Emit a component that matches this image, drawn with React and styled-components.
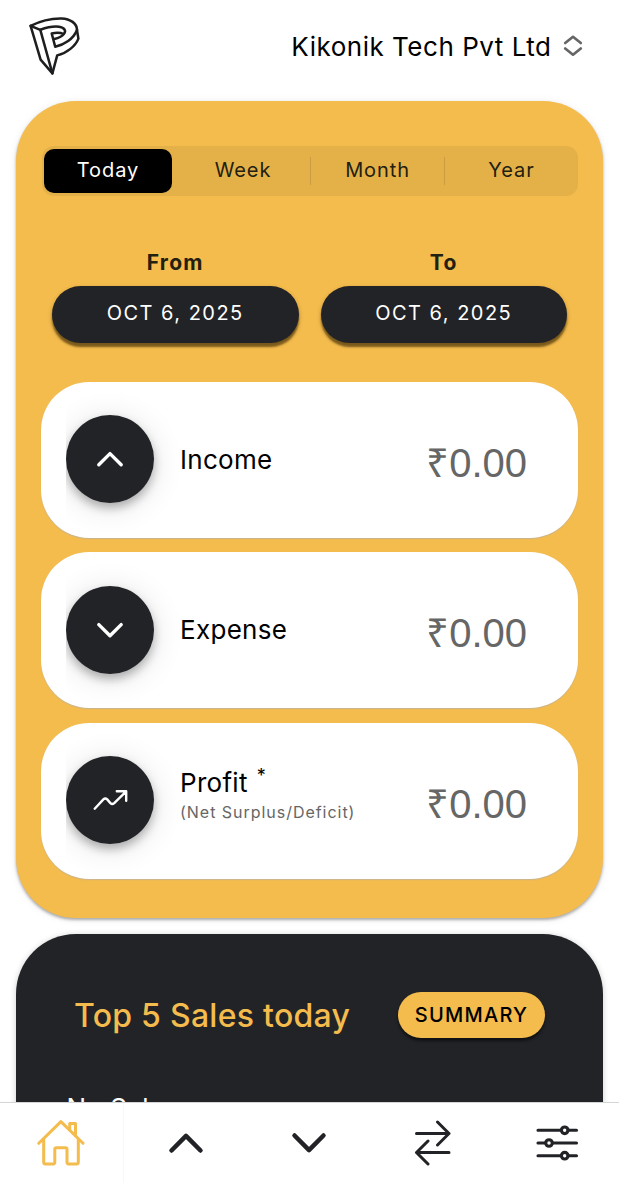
import React, { useState } from 'react';
import styled, { createGlobalStyle } from 'styled-components';

const GlobalStyle = createGlobalStyle`
  * {
    box-sizing: border-box;
  }
  body {
    margin: 0;
    background: #fff;
    font-family: Inter, "Liberation Sans", sans-serif;
  }
  button {
    font-family: inherit;
    border: none;
    padding: 0;
    cursor: pointer;
  }
`;

const Logo = () => (
  <svg width="54" height="60" viewBox="27 16 54 60" fill="none" stroke="#1d1e20" strokeWidth="2.5" strokeLinejoin="round" strokeLinecap="round">
    <path d="M30.6 25.8C41 20.5 52 18.2 61.5 18.4C70.5 18.7 77 23.5 77 30L78.4 38.6C75.6 46 67 53 57.2 55.4L52.4 73.4L40.6 59.6Z" />
    <path d="M30.6 25.8L40.3 29.8L52.4 73.4" />
    <path d="M40.3 29.8C47 27.4 54 26.2 59 26.8C64.6 27.6 66.4 30.8 64 33.8C62 36.4 58.6 38.2 54.4 39" />
    <path d="M63.6 34C60.4 32.4 55.4 32.6 51.7 33.4L55.2 46.8C64 44.8 73.6 39 77 30" />
  </svg>
);

const HomeIcon = () => (
  <svg width="48" height="48" viewBox="0 0 48 48" fill="none" stroke="#f4bb4d" strokeWidth="3" strokeLinecap="round" strokeLinejoin="round">
    <path d="M1.8 24.3L23.9 2.6L46 24.3" />
    <path d="M6.7 20V43.3Q6.7 44.9 8.3 44.9H16.2Q17.8 44.9 17.8 43.3V30.3Q17.8 28.7 19.4 28.7H28.4Q30 28.7 30 30.3V43.3Q30 44.9 31.6 44.9H39.7Q41.3 44.9 41.3 43.3V20" />
    <path d="M32.7 10.5V4.6H38.5V16.3" />
  </svg>
);

const SwapIcon = () => (
  <svg width="38" height="46" viewBox="0 0 38 46" fill="none" stroke="#222327" strokeWidth="3" strokeLinecap="round" strokeLinejoin="round">
    <path d="M2.5 13.5H35M23.5 2L35 13.5L23.5 25" />
    <path d="M35 32.5H2.5M14 21L2.5 32.5L14 44" />
  </svg>
);

const FilterIcon = () => (
  <svg width="44" height="38" viewBox="0 0 44 38" fill="none" stroke="#222327" strokeWidth="3.1" strokeLinecap="round">
    <path d="M3 6.3H26M33 6.3H41.5M3 19H10.5M17.5 19H41.5M3 31.7H26M33 31.7H41.5" />
    <circle cx="29.7" cy="6.3" r="3.3" />
    <circle cx="14" cy="19" r="3.3" />
    <circle cx="29.7" cy="31.7" r="3.3" />
  </svg>
);

const tabs = ['Today', 'Week', 'Month', 'Year'];

const ranges = [
  { label: 'From', date: 'OCT 6, 2025' },
  { label: 'To', date: 'OCT 6, 2025' },
];

const stats = [
  {
    title: 'Income',
    value: '0.00',
    icon: <path d="M-11.2 5.8L0 -5.4L11.2 5.8" strokeWidth="3.4" />,
  },
  {
    title: 'Expense',
    value: '0.00',
    icon: <path d="M-11.2 -5.4L0 5.8L11.2 -5.4" strokeWidth="3.4" />,
  },
  {
    title: 'Profit',
    mark: '*',
    note: '(Net Surplus/Deficit)',
    value: '0.00',
    icon: <path d="M-15.3 8.7L-6.6 -.6Q-4.7 -2.4 -2.8 -.6L.4 3.1Q2.3 4.8 4.2 3.1L16 -8.3M6.8 -8.7H16.2V.8" strokeWidth="2.4" />,
  },
];

const navList = [
  { name: 'home', icon: <HomeIcon /> },
  {
    name: 'income',
    icon: (
      <svg width="36" height="24" viewBox="0 0 36 24" fill="none" stroke="#222327" strokeWidth="4.5" strokeLinecap="round" strokeLinejoin="round">
        <path d="M3.5 19.5L18 4.8L32.5 19.5" />
      </svg>
    ),
  },
  {
    name: 'expense',
    icon: (
      <svg width="36" height="24" viewBox="0 0 36 24" fill="none" stroke="#222327" strokeWidth="4.5" strokeLinecap="round" strokeLinejoin="round">
        <path d="M3.5 4.5L18 19.2L32.5 4.5" />
      </svg>
    ),
  },
  { name: 'transfer', icon: <SwapIcon /> },
  { name: 'settings', icon: <FilterIcon /> },
];

const App = () => {
  const [selectedTab, setSelectedTab] = useState(0);

  return (
    <Page>
      <GlobalStyle />
      <Content>
        <Header>
          <Logo />
          <Company>
            <span>Kikonik Tech Pvt Ltd</span>
            <svg width="20" height="22" viewBox="0 0 20 22" fill="none" stroke="#666" strokeWidth="2.7" strokeLinecap="round" strokeLinejoin="round">
              <path d="M2.2 8L10 1.8L17.8 8M2.2 13.5L10 19.7L17.8 13.5" />
            </svg>
          </Company>
        </Header>

        <Summary>
          <Segment>
            {tabs.map((tab, index) => (
              <SegmentButton
                key={tab}
                $active={selectedTab === index}
                $divider={index > 1}
                onClick={() => setSelectedTab(index)}
              >
                {tab}
              </SegmentButton>
            ))}
          </Segment>

          <RangeRow>
            {ranges.map((range) => (
              <RangeItem key={range.label}>
                <RangeLabel>{range.label}</RangeLabel>
                <DateButton>{range.date}</DateButton>
              </RangeItem>
            ))}
          </RangeRow>

          <StatList>
            {stats.map((stat) => (
              <StatCard key={stat.title}>
                <IconWrap>
                  <IconCircle>
                    <svg width="40" height="40" viewBox="-20 -20 40 40" fill="none" stroke="#fff" strokeLinecap="round" strokeLinejoin="round">
                      {stat.icon}
                    </svg>
                  </IconCircle>
                </IconWrap>
                <StatText $hasNote={!!stat.note}>
                  <StatTitle>
                    {stat.title}
                    {stat.mark && <sup>{stat.mark}</sup>}
                  </StatTitle>
                  {stat.note && <StatNote>{stat.note}</StatNote>}
                </StatText>
                <Amount>₹{stat.value}</Amount>
              </StatCard>
            ))}
          </StatList>
        </Summary>

        <SalesCard>
          <SalesHead>
            <h2>Top 5 Sales today</h2>
            <SummaryButton>SUMMARY</SummaryButton>
          </SalesHead>
          <EmptyText>No Sales</EmptyText>
        </SalesCard>
      </Content>

      <Footer>
        {navList.map((nav) => (
          <NavButton key={nav.name} aria-label={nav.name}>{nav.icon}</NavButton>
        ))}
      </Footer>
    </Page>
  );
};

export default App;

const Page = styled.div`
  display: flex;
  flex-direction: column;
  width: 619px;
  height: 1200px;
  overflow: hidden;
  background: #fff;
`;

const Content = styled.main`
  flex: 1;
  min-height: 0;
  overflow: hidden;
  padding: 0 16px;
`;

const Header = styled.header`
  display: flex;
  align-items: center;
  justify-content: space-between;
  height: 101px;
  padding: 0 20px 9px 11px;
`;

const Company = styled.div`
  display: flex;
  align-items: center;
  gap: 11.5px;
  font-size: 26px;
  letter-spacing: 0.52px;
  color: #000;
`;

const Summary = styled.section`
  height: 817px;
  padding: 44.5px 25px 0;
  border-radius: 60px;
  background: #f4bb4d;
  box-shadow: 0 2px 3px rgba(0, 0, 0, 0.3), 0 1px 8px rgba(0, 0, 0, 0.08);
`;

const Segment = styled.div`
  display: grid;
  grid-template-columns: repeat(4, 1fr);
  height: 50.5px;
  margin-left: 1px;
  padding: 3px 0;
  border-radius: 12px;
  background: #e4b149;
`;

const SegmentButton = styled.button`
  margin: ${({ $active }) => ($active ? '0 4px 0 2px' : '8px 0')};
  padding-bottom: 2px;
  border-left: ${({ $divider }) => ($divider ? '1.5px solid #cb9c40' : 'none')};
  border-radius: ${({ $active }) => ($active ? '10px' : '0')};
  background: ${({ $active }) => ($active ? '#000' : 'transparent')};
  color: ${({ $active }) => ($active ? '#fff' : '#222010')};
  font-size: 20px;
  letter-spacing: 0.9px;
`;

const RangeRow = styled.div`
  display: grid;
  grid-template-columns: 1fr 1fr;
  gap: 22px;
  margin-top: 53px;
  padding: 0 11px;
`;

const RangeItem = styled.div`
  display: flex;
  flex-direction: column;
  align-items: center;
`;

const RangeLabel = styled.span`
  height: 37px;
  line-height: 27px;
  font-size: 21px;
  font-weight: 700;
  letter-spacing: 1.3px;
  color: #222010;
`;

const DateButton = styled.button`
  width: 100%;
  height: 56.5px;
  padding-bottom: 2px;
  border-radius: 29px;
  background: #222327;
  box-shadow: 0 4px 2px rgba(60, 40, 0, 0.6), 0 2px 5px rgba(0, 0, 0, 0.2);
  color: #fff;
  font-size: 20px;
  letter-spacing: 1.48px;
`;

const StatList = styled.div`
  display: flex;
  flex-direction: column;
  gap: 14.5px;
  margin-top: 39px;
`;

const StatCard = styled.div`
  display: flex;
  align-items: center;
  height: 156.2px;
  padding: 0 51px 0 25px;
  border-radius: 48px;
  background: #fff;
  box-shadow: 0 1px 1px rgba(190, 180, 160, 0.8);
`;

/* the circle shadow stops at the left edge of its cell */
const IconWrap = styled.div`
  display: flex;
  align-items: center;
  width: 114px;
  height: 100%;
  padding-bottom: 1px;
  overflow: hidden;
`;

const IconCircle = styled.div`
  display: flex;
  align-items: center;
  justify-content: center;
  width: 88px;
  height: 88px;
  border-radius: 50%;
  background: #222327;
  box-shadow: 0 5px 10px rgba(0, 0, 0, 0.28), 0 4px 32px rgba(0, 0, 0, 0.12);
`;

const StatText = styled.div`
  flex: 1;
  padding-bottom: ${({ $hasNote }) => ($hasNote ? '10px' : '0')};
  color: #000;
`;

const StatTitle = styled.div`
  font-size: 26px;
  line-height: 32px;
  letter-spacing: 0.3px;

  sup {
    margin-left: 9px;
    font-size: 18px;
    line-height: 0;
  }
`;

const StatNote = styled.div`
  font-size: 16px;
  line-height: 26px;
  letter-spacing: 0.97px;
  color: #666;
`;

const Amount = styled.div`
  padding-top: 3px;
  font-family: "Liberation Sans", sans-serif;
  font-size: 40px;
  color: #666;
`;

const SalesCard = styled.section`
  height: 400px;
  margin-top: 16px;
  padding: 58px 58px 0 58px;
  border-radius: 60px;
  background: #222327;
  box-shadow: 0 1px 6px rgba(0, 0, 0, 0.2);
`;

const SalesHead = styled.div`
  display: flex;
  align-items: center;
  justify-content: space-between;
  height: 46px;

  h2 {
    margin: 0;
    font-size: 32px;
    font-weight: 500;
    letter-spacing: 0.27px;
    color: #f4bb4d;
  }
`;

const SummaryButton = styled.button`
  width: 147px;
  height: 46px;
  border-radius: 23px;
  background: #f4bb4d;
  box-shadow: 0 3px 3px rgba(0, 0, 0, 0.5);
  color: #000;
  font-size: 20px;
  font-weight: 500;
  letter-spacing: 1.25px;
`;

const EmptyText = styled.p`
  margin: 54px 0 0 -7.5px;
  font-size: 26px;
  line-height: 32px;
  letter-spacing: 0.4px;
  color: #fff;
`;

const Footer = styled.nav`
  display: grid;
  grid-template-columns: repeat(5, 1fr);
  height: 98px;
  padding-bottom: 17px;
  border-top: 1px solid #d5d5d6;
  background: #fff;
`;

const NavButton = styled.button`
  display: flex;
  align-items: center;
  justify-content: center;
  background: transparent;

  &:first-child {
    border-right: 1px solid #f8f8f8;
  }
`;
